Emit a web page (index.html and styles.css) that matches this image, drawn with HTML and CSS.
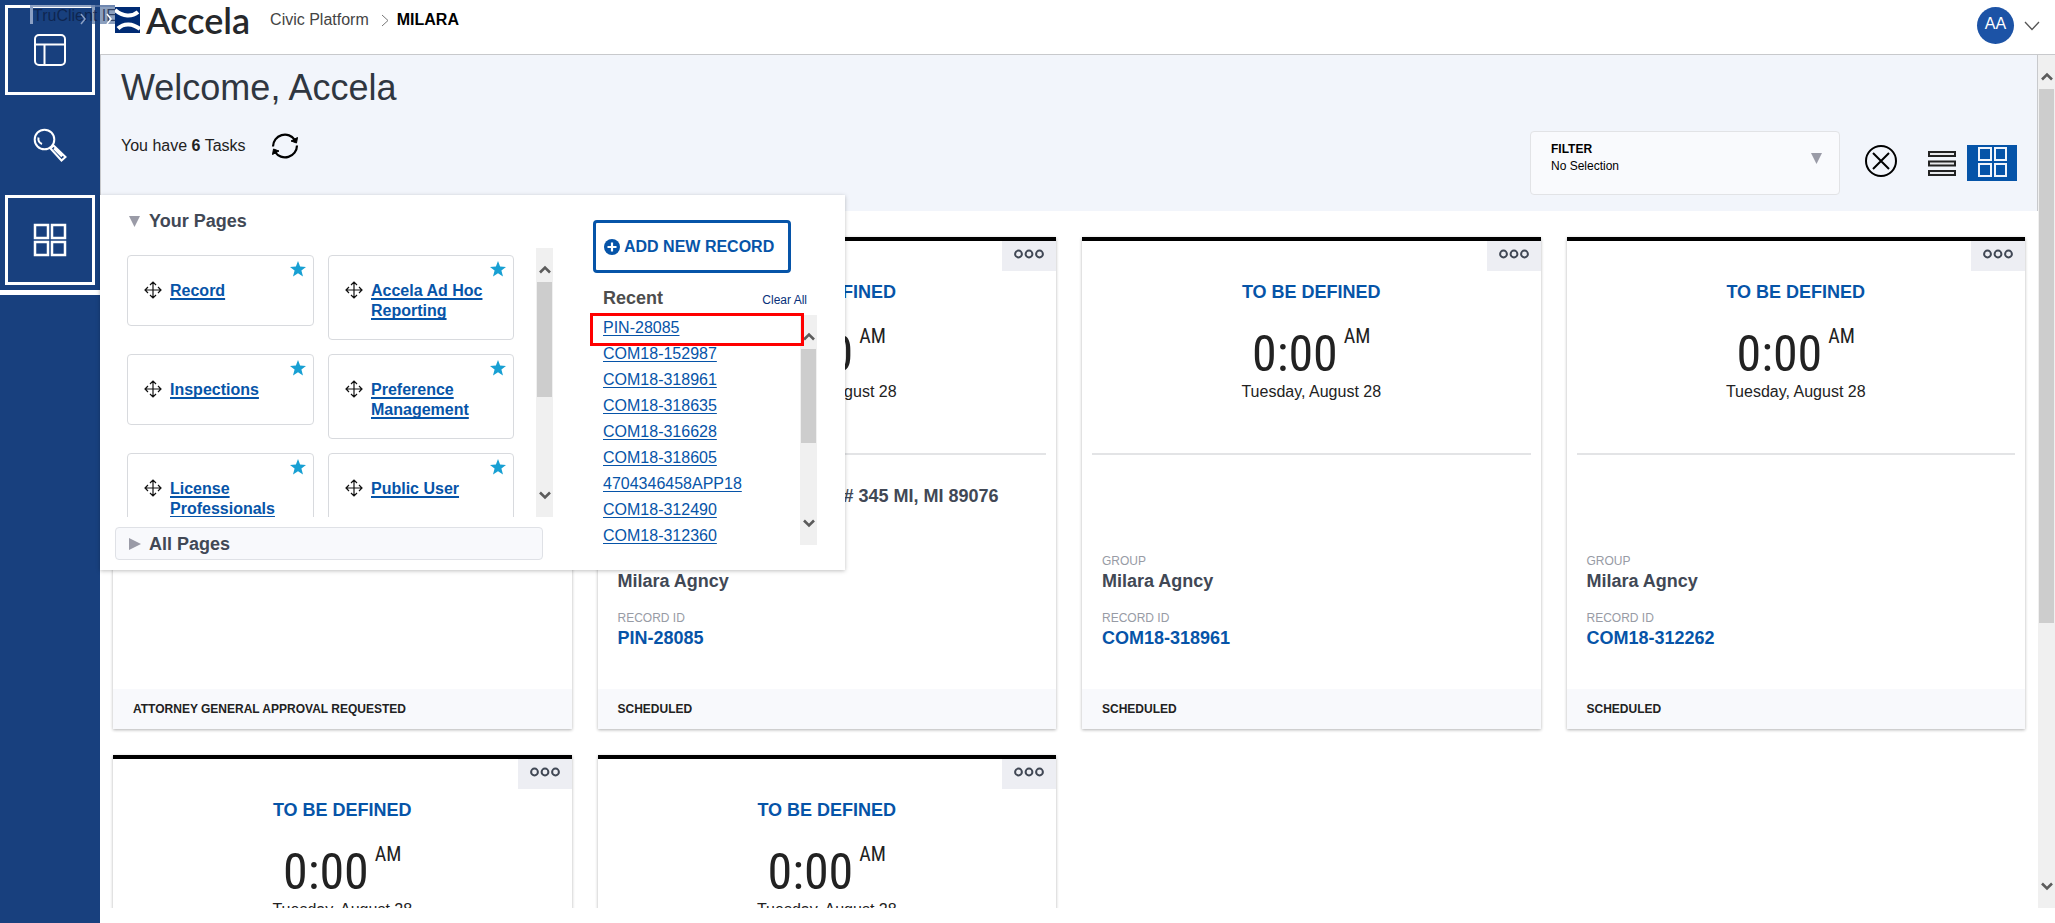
FILE: index.html
```html
<!DOCTYPE html>
<html lang="en">
<head>
<meta charset="utf-8">
<title>Accela Civic Platform</title>
<link rel="stylesheet" href="styles.css">
</head>
<body>
<svg class="defs" aria-hidden="true">
  <symbol id="move" viewBox="0 0 18 18"><path d="M9 1v16M1 9h16M6 4l3-3 3 3M6 14l3 3 3-3M4 6L1 9l3 3M14 6l3 3-3 3" fill="none" stroke="#111" stroke-width="1.2"/></symbol>
  <symbol id="star" viewBox="0 0 16 16"><path d="M8 0l2.1 5.6 5.9.3-4.6 3.7L13 15.500 8 12.200 3 15.500l1.600-5.900L0 5.900l5.900-.3z" fill="#18a0d3"/></symbol>
  <symbol id="dots" viewBox="0 0 30 10"><g fill="none" stroke="#414855" stroke-width="2"><circle cx="4.500" cy="5" r="3.400"/><circle cx="15" cy="5" r="3.400"/><circle cx="25.500" cy="5" r="3.400"/></g></symbol>
  <symbol id="up" viewBox="0 0 12 9"><path d="M1 7.500l5-5 5 5" fill="none" stroke="#5c5c5c" stroke-width="2.600"/></symbol>
  <symbol id="down" viewBox="0 0 12 9"><path d="M1 1.500l5 5 5-5" fill="none" stroke="#5c5c5c" stroke-width="2.600"/></symbol>
  <symbol id="tri-down" viewBox="0 0 12 12"><path d="M0 1h11L5.500 12z" fill="#9a9ba7"/></symbol>
  <symbol id="tri-right" viewBox="0 0 12 12"><path d="M0 0l12 6L0 12z" fill="#9a9ba7"/></symbol>
</svg>
<div class="app">
  <nav class="sidebar" aria-label="Main">
    <button class="nav-item boxed" aria-label="Dashboard"><svg width="32" height="32" viewBox="0 0 32 32" fill="none" stroke="#fff" stroke-width="2"><rect x="1" y="1" width="30" height="30" rx="4"/><path d="M1 10.500h30M10.500 10.500V31"/></svg></button>
    <button class="nav-item" aria-label="Search"><svg width="34" height="34" viewBox="0 0 34 34" fill="none" stroke="#fff" stroke-width="2"><circle cx="11.500" cy="11.500" r="9.800"/><path d="M5.500 9.500c-.5 3 1 5.500 3.500 6.500M17.500 20.500l3-3 12 11.500-4 3.500zM21 20.500l8 8"/></svg></button>
    <button class="nav-item boxed" aria-label="Pages"><svg width="34" height="34" viewBox="0 0 34 34" fill="none" stroke="#fff" stroke-width="2.500"><path d="M2 2h13v13H2zM19 2h13v13H19zM2 19h13v13H2zM19 19h13v13H19z"/></svg></button>
    <span class="nav-line"></span>
  </nav>
  <div class="column">
    <header class="topbar">
      <svg class="logo" width="25" height="26" viewBox="0 0 25 26"><path d="M0 0h25v26H0z" fill="#002b74"/><path d="M0 3c8 7 17 7 23 2M3 21.500c6-6 15-5 22 .5" fill="none" stroke="#fff" stroke-width="4"/></svg>
      <span class="brand">Accela</span>
      <a class="crumb" href="#">Civic Platform</a>
      <svg width="8" height="13" viewBox="0 0 8 13"><path d="M1 1l6 5.500L1 12" fill="none" stroke="#777"/></svg>
      <strong class="crumb-now">MILARA</strong>
      <div class="user">
        <span class="avatar">AA</span>
        <svg width="16" height="10" viewBox="0 0 16 10"><path d="M1 1l7 7.500L15 1" fill="none" stroke="#555" stroke-width="1.300"/></svg>
      </div>
    </header>
    <div class="view">
      <main class="main">
        <section class="hero">
          <div class="greeting">
            <h1>Welcome, Accela</h1>
            <div class="tasks"><span>You have <b>6</b> Tasks</span>
              <button class="icon" aria-label="Refresh"><svg width="28" height="28" viewBox="0 0 28 28" fill="none" stroke="#000" stroke-width="2.200"><path d="M2 14.500A12 12 0 0 1 24 8M26 13.500A12 12 0 0 1 4 20"/><path d="M26.500 5.500l-1 5.500-5.500-2zM1.500 22.500l1-5.500 5.500 2z" fill="#000" stroke-width="1"/></svg></button>
            </div>
          </div>
          <div class="tools">
            <div class="filter">
              <div class="filter-text"><label for="filter">FILTER</label><select id="filter"><option>No Selection</option></select></div>
              <svg width="12" height="12"><use href="#tri-down"/></svg>
            </div>
            <button class="icon clear" aria-label="Clear filter"><svg width="32" height="32" viewBox="0 0 32 32" fill="none" stroke="#000" stroke-width="2"><circle cx="16" cy="16" r="15"/><path d="M8 8l16 16M24 8L8 24"/></svg></button>
            <button class="icon list" aria-label="List view"><svg width="28" height="25" viewBox="0 0 28 25" fill="#e8e9ec" stroke="#222" stroke-width="2"><path d="M1 1h26v4H1zM1 10.500h26v4H1zM1 20h26v4H1z"/></svg></button>
            <button class="icon grid-view" aria-label="Card view"><svg width="29" height="30" viewBox="0 0 29 30" fill="none" stroke="#f2f5fb" stroke-width="2"><path d="M1 1h12v12H1zM17 1h11v12H17zM1 17h12v12H1zM17 17h11v12H17z"/></svg></button>
          </div>
        </section>
        <section class="cards">
          <article class="card">
            <div class="card-body"></div>
            <footer>ATTORNEY GENERAL APPROVAL REQUESTED</footer>
          </article>
          <article class="card">
            <button class="more" aria-label="More"><svg width="30" height="10"><use href="#dots"/></svg></button>
            <div class="when"><h2>TO BE DEFINED</h2><div class="time">0:00<sup>AM</sup></div><p>Tuesday, August 28</p></div>
            <hr>
            <div class="card-body"><p class="address"># 345 MI, MI 89076</p>
              <dl><dt>GROUP</dt><dd>Milara Agncy</dd><dt>RECORD ID</dt><dd><a href="#">PIN-28085</a></dd></dl></div>
            <footer>SCHEDULED</footer>
          </article>
          <article class="card">
            <button class="more" aria-label="More"><svg width="30" height="10"><use href="#dots"/></svg></button>
            <div class="when"><h2>TO BE DEFINED</h2><div class="time">0:00<sup>AM</sup></div><p>Tuesday, August 28</p></div>
            <hr>
            <div class="card-body"><dl><dt>GROUP</dt><dd>Milara Agncy</dd><dt>RECORD ID</dt><dd><a href="#">COM18-318961</a></dd></dl></div>
            <footer>SCHEDULED</footer>
          </article>
          <article class="card">
            <button class="more" aria-label="More"><svg width="30" height="10"><use href="#dots"/></svg></button>
            <div class="when"><h2>TO BE DEFINED</h2><div class="time">0:00<sup>AM</sup></div><p>Tuesday, August 28</p></div>
            <hr>
            <div class="card-body"><dl><dt>GROUP</dt><dd>Milara Agncy</dd><dt>RECORD ID</dt><dd><a href="#">COM18-312262</a></dd></dl></div>
            <footer>SCHEDULED</footer>
          </article>
          <article class="card">
            <button class="more" aria-label="More"><svg width="30" height="10"><use href="#dots"/></svg></button>
            <div class="when"><h2>TO BE DEFINED</h2><div class="time">0:00<sup>AM</sup></div><p>Tuesday, August 28</p></div>
          </article>
          <article class="card">
            <button class="more" aria-label="More"><svg width="30" height="10"><use href="#dots"/></svg></button>
            <div class="when"><h2>TO BE DEFINED</h2><div class="time">0:00<sup>AM</sup></div><p>Tuesday, August 28</p></div>
          </article>
        </section>
      </main>
      <div class="scrollbar"><svg width="12" height="9"><use href="#up"/></svg><div class="track"><div class="thumb thumb-main"></div></div><svg width="12" height="9"><use href="#down"/></svg></div>
    </div>
    <aside class="launcher">
      <div class="pages">
        <h3><svg width="12" height="12"><use href="#tri-down"/></svg>Your Pages</h3>
        <div class="page-scroll">
          <div class="page-grid">
            <div class="page"><svg class="star" width="16" height="16"><use href="#star"/></svg><svg class="move" width="18" height="18"><use href="#move"/></svg><a href="#">Record</a></div>
            <div class="page"><svg class="star" width="16" height="16"><use href="#star"/></svg><svg class="move" width="18" height="18"><use href="#move"/></svg><a href="#">Accela Ad Hoc Reporting</a></div>
            <div class="page"><svg class="star" width="16" height="16"><use href="#star"/></svg><svg class="move" width="18" height="18"><use href="#move"/></svg><a href="#">Inspections</a></div>
            <div class="page"><svg class="star" width="16" height="16"><use href="#star"/></svg><svg class="move" width="18" height="18"><use href="#move"/></svg><a href="#">Preference Management</a></div>
            <div class="page"><svg class="star" width="16" height="16"><use href="#star"/></svg><svg class="move" width="18" height="18"><use href="#move"/></svg><a href="#">License Professionals</a></div>
            <div class="page"><svg class="star" width="16" height="16"><use href="#star"/></svg><svg class="move" width="18" height="18"><use href="#move"/></svg><a href="#">Public User</a></div>
          </div>
          <div class="scrollbar"><svg width="12" height="9"><use href="#up"/></svg><div class="track"><div class="thumb thumb-pages"></div></div><svg width="12" height="9"><use href="#down"/></svg></div>
        </div>
        <button class="all-pages"><svg width="12" height="12"><use href="#tri-right"/></svg>All Pages</button>
      </div>
      <div class="records">
        <button class="add"><svg width="16" height="16" viewBox="0 0 16 16"><circle cx="8" cy="8" r="8" fill="#0654a8"/><path d="M8 3.500v9M3.500 8h9" stroke="#fff" stroke-width="2.200"/></svg>ADD NEW RECORD</button>
        <div class="recent-head"><h3>Recent</h3><a href="#">Clear All</a></div>
        <div class="recent">
          <ul>
            <li><a href="#">PIN-28085</a></li><li><a href="#">COM18-152987</a></li><li><a href="#">COM18-318961</a></li><li><a href="#">COM18-318635</a></li><li><a href="#">COM18-316628</a></li><li><a href="#">COM18-318605</a></li><li><a href="#">4704346458APP18</a></li><li><a href="#">COM18-312490</a></li><li><a href="#">COM18-312360</a></li>
          </ul>
          <div class="scrollbar"><svg width="12" height="9"><use href="#up"/></svg><div class="track"><div class="thumb thumb-recent"></div></div><svg width="12" height="9"><use href="#down"/></svg></div>
          <span class="highlight"></span>
        </div>
      </div>
    </aside>
  </div>
</div>
<div class="recorder"><span>TruClient IE</span>
  <svg width="32" height="12" viewBox="0 0 32 12" fill="none" stroke-width="1.500"><path d="M1 1l4 5-4 5" stroke="#8ba0c4"/><path d="M27 1l4 5-4 5" stroke="#fff"/></svg>
</div>
</body>
</html>
```
FILE: styles.css
```css
* { box-sizing: border-box; }
body, h1, h2, h3, p, ul, dl, dd, hr { margin: 0; padding: 0; }
body { font: 16px/20px "Liberation Sans", Arial, sans-serif; color: #222; background: #fff; overflow: hidden; }
button, select { font: inherit; color: inherit; border: 0; padding: 0; background: none; }
a { color: #0654a8; }
svg { display: block; flex: none; }
.defs { position: absolute; width: 0; height: 0; }

.app { display: flex; height: 100vh; }
.sidebar { flex: 0 0 100px; padding: 5px 0; background: #18407e; display: flex; flex-direction: column; align-items: center; gap: 5px; }
.nav-item { width: 90px; height: 90px; flex: none; display: flex; align-items: center; justify-content: center; }
.boxed { border: 3px solid #fff; }
.nav-line { width: 100%; height: 5px; background: #fff; }
.column { flex: 1; min-width: 0; display: flex; flex-direction: column; position: relative; padding-bottom: 15px; }

.topbar { flex: 0 0 55px; display: flex; align-items: center; padding: 0 15px 14px; border-bottom: 1px solid #c8c9cc; }
.brand { font: 600 36px/40px Lato, sans-serif; color: #26282b; margin: 0 20px 0 6px; }
.crumb { color: #444; text-decoration: none; margin-right: 12px; }
.crumb-now { color: #000; margin-left: 8px; }
.user { display: flex; align-items: center; align-self: flex-start; gap: 10px; margin: 0 0 -14px auto; padding-top: 7px; }
.avatar { width: 37px; height: 37px; border-radius: 50%; background: #1c53a6; color: #fff; text-align: center; line-height: 33px; }

.view { flex: 1; min-height: 0; display: flex; }
.main { flex: 1; min-width: 0; overflow: hidden; }
.hero { display: flex; justify-content: space-between; align-items: flex-end; padding: 12px 20px 16px 20px; background: #f2f5fb; border: solid #c8c9cc; border-width: 0 1px; }
.greeting { padding-bottom: 35px; }
h1 { font-size: 36px; line-height: 42px; font-weight: 400; color: #2f3640; margin-bottom: 23px; }
.tasks { display: flex; align-items: center; gap: 25px; height: 28px; }
.tools { display: flex; align-items: center; }
.filter { width: 310px; height: 64px; display: flex; justify-content: space-between; padding: 9px 16px 9px 20px; background: #f9fafd; border: 1px solid #e2e3e6; border-radius: 4px; font-size: 12px; line-height: 17px; color: #000; }
.filter svg { margin-top: 11px; }
.filter-text { display: flex; flex-direction: column; flex: 1; }
.filter label { font-weight: 700; }
.filter select { appearance: none; height: 17px; }
.clear { margin: 0 31px 4px 25px; }
.list { margin-right: 11px; }
.grid-view { width: 50px; height: 36px; background: #0654a8; display: flex; align-items: center; justify-content: center; padding-bottom: 2px; }

.cards { display: grid; grid-template-columns: repeat(4, 1fr); gap: 26px; padding: 26px 13px; }
.card { position: relative; min-height: 492px; display: flex; flex-direction: column; border-top: 4px solid #000; background: #fff; box-shadow: 0 1px 3px rgba(0, 0, 0, .3); }
.more { position: absolute; top: 0; right: 0; width: 54px; height: 30px; padding: 0 12px 4px; background: #edeef3; }
.when { padding-top: 41px; text-align: center; }
h2 { font-size: 18px; line-height: 20px; color: #0654a8; }
.time { height: 80px; font: 50px/104px "Roboto Condensed", "Liberation Sans Narrow", "DejaVu Sans Condensed", sans-serif; }
.time sup { font-size: 20px; line-height: 20px; vertical-align: 28px; margin-left: 6px; }
hr { border: 0; height: 2px; background: #e3e4e6; margin: 51px 10px 0; }
.card-body { flex: 1; display: flex; flex-direction: column; padding: 29px 20px 39px; }
.address { font-weight: 700; font-size: 18px; line-height: 24px; color: #414855; margin-left: 226px; }
dl { margin-top: auto; }
dt { font-size: 12px; line-height: 16px; color: #979ba5; }
dd { font-size: 18px; line-height: 24px; font-weight: 700; color: #414855; }
dd + dt { margin-top: 17px; }
dd a { text-decoration: none; }
.card footer { height: 40px; padding: 0 20px; font-size: 12px; font-weight: 700; line-height: 40px; background: #f8f9fc; }

.scrollbar { flex: 0 0 17px; display: flex; flex-direction: column; align-items: center; background: #f0f0f0; padding: 17px 1px; }
.track { flex: 1; min-height: 0; width: 100%; padding: 8px 0; }
.thumb { background: #cdcdcd; }
.thumb-main { height: 68%; }
.thumb-pages { height: 115px; }
.thumb-recent { height: 94px; }

.launcher { position: absolute; top: 195px; left: 0; width: 745px; display: flex; gap: 40px; padding: 14px 28px 10px 15px; background: #fff; box-shadow: 0 1px 4px rgba(0, 0, 0, .25); }
.pages { flex: 0 0 438px; }
h3 { display: flex; align-items: center; font-size: 18px; line-height: 24px; color: #414855; }
.pages h3 { gap: 8px; padding-left: 14px; margin-bottom: 15px; }
.page-scroll { display: flex; justify-content: space-between; height: 269px; padding-left: 12px; overflow: hidden; margin-bottom: 10px; }
.page-grid { display: grid; grid-template-columns: 187px 186px; grid-auto-rows: max-content; gap: 14px; align-items: start; padding-top: 7px; }
.page { position: relative; min-height: 71px; display: flex; gap: 8px; padding: 25px 14px 18px 16px; border: 1px solid #d8dade; border-radius: 4px; }
.page a { font-weight: 700; text-decoration-thickness: 2px; text-underline-offset: 2px; text-decoration-skip-ink: none; }
.star { position: absolute; top: 5px; right: 7px; }
.all-pages { display: flex; align-items: center; gap: 8px; width: 428px; height: 33px; padding-left: 13px; background: #f8f9fc; border: 1px solid #dfe1e6; border-radius: 4px; font-size: 18px; font-weight: 700; color: #414855; }
.records { flex: 1; padding-top: 11px; }
.add { display: flex; align-items: center; gap: 4px; width: 198px; height: 53px; padding-left: 8px; border: 3px solid #0654a8; border-radius: 4px; font-weight: 700; color: #0654a8; }
.recent-head { display: flex; justify-content: space-between; align-items: baseline; padding: 13px 10px 5px 10px; }
.recent-head h3 { color: #4d4d4d; }
.recent-head a { font-size: 12px; color: #062f7a; text-decoration: none; }
.recent { position: relative; display: flex; justify-content: space-between; height: 230px; }
.recent ul { list-style: none; padding-left: 10px; overflow: hidden; }
.recent li { line-height: 26px; }
.recent a { text-underline-offset: 2px; text-decoration-thickness: 1px; text-decoration-skip-ink: none; }
.highlight { position: absolute; top: -2px; left: -3px; width: 214px; height: 33px; border: 3px solid #f00; }

.recorder { position: absolute; top: 5px; left: 30px; width: 85px; height: 19px; border-left: 3px solid #8ba0c4; border-top: 2px solid rgba(100, 125, 170, .7); background: linear-gradient(90deg, transparent 58px, rgba(24, 64, 126, .5) 58px); }
.recorder span { display: block; width: 82px; overflow: hidden; line-height: 17px; color: rgba(10, 25, 60, .7); white-space: nowrap; }
.recorder svg { position: absolute; left: 47px; top: 6px; }
```
